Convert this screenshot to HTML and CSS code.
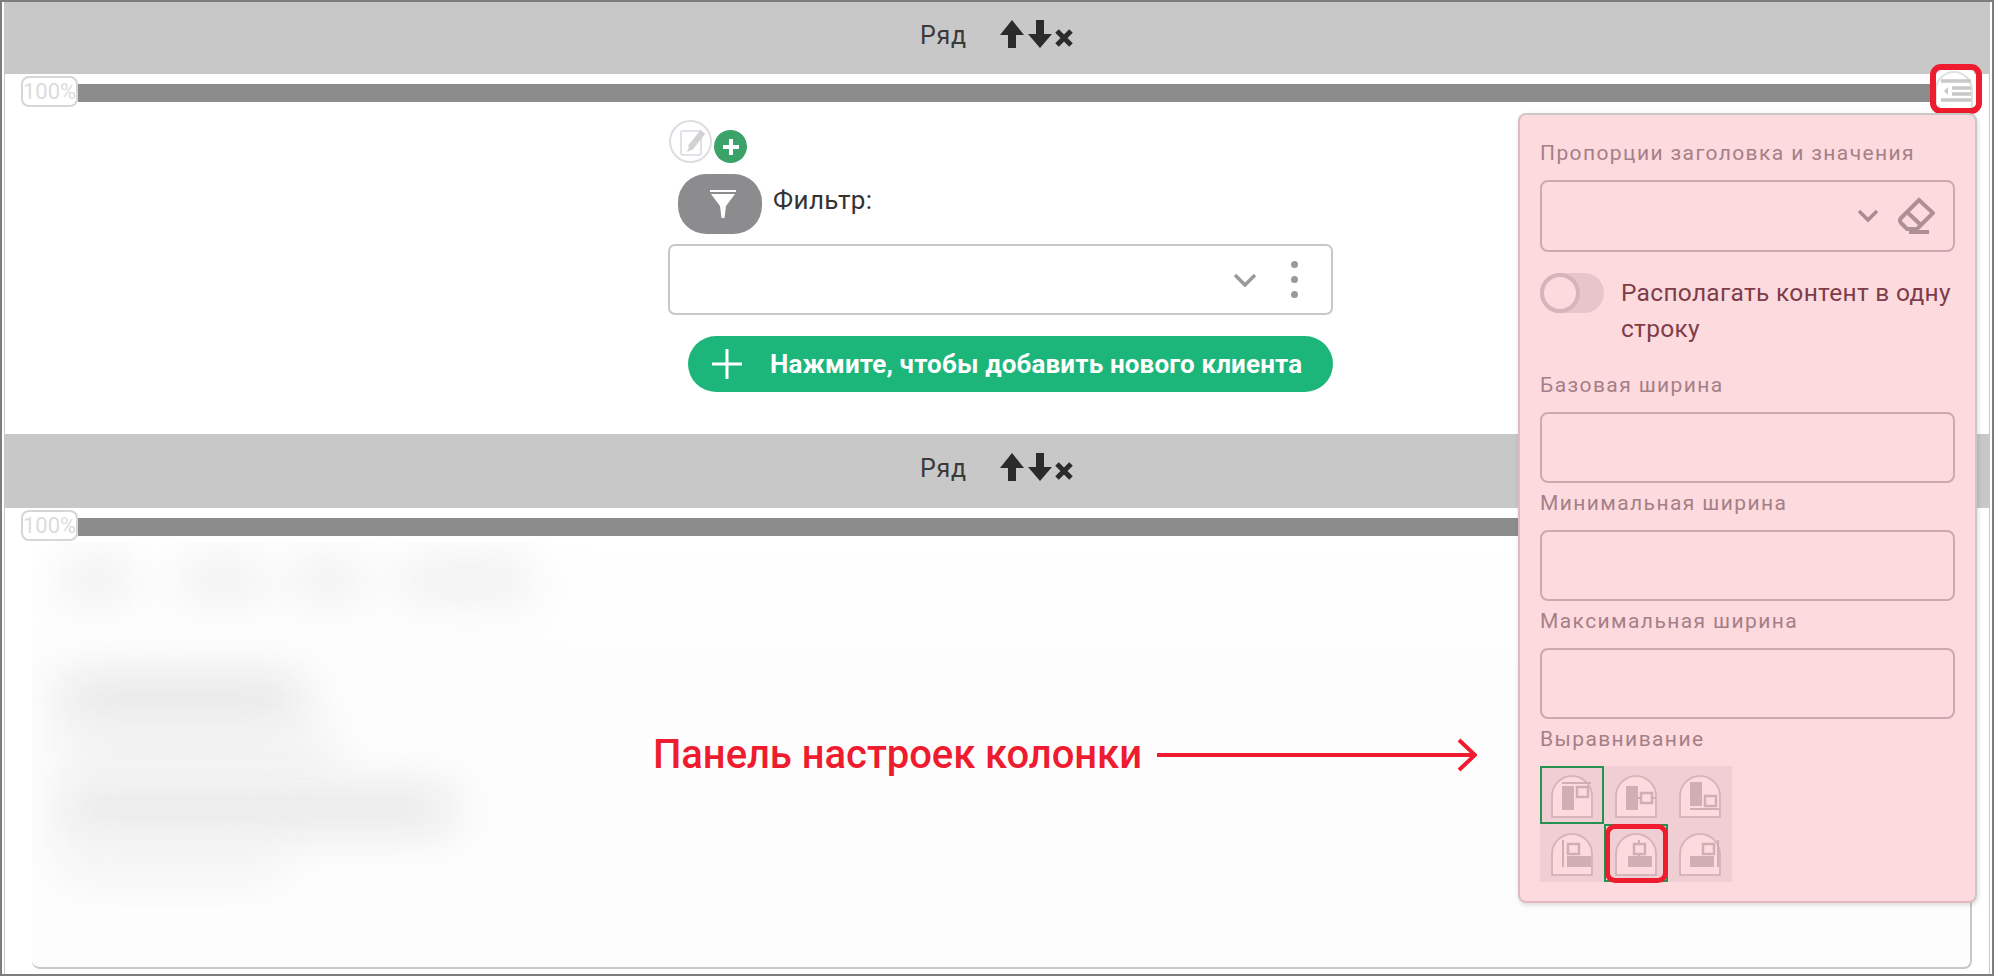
FILE: index.html
```html
<!DOCTYPE html>
<html lang="ru">
<head>
  <meta charset="UTF-8" />
  <title>Панель настроек колонки</title>
  <link rel="stylesheet" href="styles.css">
</head>
<body>
  <div class="page">
    <div class="rows">

      <div class="row-head">
        <span class="row-title">Ряд</span>
        <span class="row-tools">
          <svg width="24" height="28" viewBox="0 0 24 28"><path d="M12 0 24 15H16V28H8V15H0Z"/></svg>
          <svg width="24" height="28" viewBox="0 0 24 28"><path d="M8 0H16V14H24L12 28 0 14H8Z"/></svg>
          <svg width="20" height="18" viewBox="0 0 20 18"><path d="M3 2 17 16M17 2 3 16"/></svg>
        </span>
      </div>
      <div class="row-body row-first">
        <div class="width-line">
          <span class="width-badge">100%</span>
          <span class="width-bar"></span>
        </div>
        <div class="column">
          <div class="edit-line">
            <span class="edit-btn">
              <svg width="28" height="28" viewBox="0 0 28 28">
                <rect x="4" y="3" width="20" height="24" rx="2" class="edit-box"/>
                <path d="M26 4 13 20" class="edit-pen"/>
                <path d="M13 17 10 24 16 21Z" class="edit-tip"/>
              </svg>
            </span>
            <span class="add-btn">
              <svg width="18" height="18" viewBox="0 0 18 18"><path d="M7 1h4v6h6v4h-6v6H7v-6H1V7h6z"/></svg>
            </span>
          </div>
          <div class="filter-line">
            <span class="filter-btn">
              <svg width="28" height="30" viewBox="0 0 28 30">
                <path d="M1 1H27V3H1ZM2 5H26L17 17 15.5 29H12.5L11 17Z"/>
              </svg>
            </span>
            <span class="filter-label">Фильтр:</span>
          </div>
          <div class="select-box">
            <svg class="chevron" width="24" height="14" viewBox="0 0 24 14"><path d="M2 2 12 12 22 2"/></svg>
            <span class="more-dots"><i></i><i></i><i></i></span>
          </div>
          <div class="add-client">
            <svg width="32" height="32" viewBox="0 0 32 32"><path d="M16 1V31M1 16H31"/></svg>
            <span>Нажмите, чтобы добавить нового клиента</span>
          </div>
        </div>
      </div>

      <div class="row-head row-head-tall">
        <span class="row-title">Ряд</span>
        <span class="row-tools">
          <svg width="24" height="28" viewBox="0 0 24 28"><path d="M12 0 24 15H16V28H8V15H0Z"/></svg>
          <svg width="24" height="28" viewBox="0 0 24 28"><path d="M8 0H16V14H24L12 28 0 14H8Z"/></svg>
          <svg width="20" height="18" viewBox="0 0 20 18"><path d="M3 2 17 16M17 2 3 16"/></svg>
        </span>
      </div>
      <div class="row-body row-last">
        <div class="width-line">
          <span class="width-badge">100%</span>
          <span class="width-bar"></span>
        </div>
        <div class="table-box">
          <div class="blur-chips"><i></i><i></i><i></i><i></i></div>
          <div class="blur-line line-a"></div>
          <div class="blur-line line-b"></div>
          <div class="blur-line line-c"></div>
          <div class="blur-line line-d"></div>
        </div>
      </div>
    </div>

    <!-- кнопка настроек колонки -->
    <div class="settings-btn">
      <svg width="40" height="38" viewBox="0 0 40 38">
        <path d="M2 38V20a18 18 0 0 1 36 0V38" class="dome"/>
        <path d="M7 11H37M18 18H37M18 24H37M7 30H37" class="dome-lines"/>
        <path d="M14 17V25L10 21Z" class="dome-arrow"/>
      </svg>
    </div>
    <div class="mark mark-settings"></div>

    <!-- панель настроек -->
    <div class="panel">
      <div class="panel-label">Пропорции заголовка и значения</div>
      <div class="panel-select">
        <svg class="panel-chevron" width="22" height="14" viewBox="0 0 22 14"><path d="M2 2 11 11 20 2"/></svg>
        <svg class="panel-eraser" width="38" height="38" viewBox="0 0 38 38">
          <path d="M22 3 36 16 20 32H10L4 26Q2 23 4 21ZM10 15 25 29M12 35H32"/>
        </svg>
      </div>
      <div class="toggle-line">
        <span class="toggle"><span class="toggle-knob"></span></span>
        <span class="toggle-text">Располагать контент в одну строку</span>
      </div>
      <div class="panel-label label-first">Базовая ширина</div>
      <div class="panel-input"></div>
      <div class="panel-label">Минимальная ширина</div>
      <div class="panel-input"></div>
      <div class="panel-label">Максимальная ширина</div>
      <div class="panel-input"></div>
      <div class="panel-label">Выравнивание</div>
      <div class="align-grid">
        <div class="align-cell active">
          <svg width="64" height="58" viewBox="0 0 64 58">
            <path class="ic-dome" d="M12 51V30a20 20 0 0 1 40 0V51Z"/>
            <path class="ic-line" d="M22 17H51"/>
            <rect class="ic-fill" x="22" y="20" width="12" height="24"/>
            <rect class="ic-box" x="37" y="21" width="11" height="10"/>
          </svg>
        </div>
        <div class="align-cell">
          <svg width="64" height="58" viewBox="0 0 64 58">
            <path class="ic-dome" d="M12 51V30a20 20 0 0 1 40 0V51Z"/>
            <path class="ic-line" d="M34 32H52"/>
            <rect class="ic-fill" x="22" y="20" width="12" height="24"/>
            <rect class="ic-box" x="37" y="27" width="11" height="10"/>
          </svg>
        </div>
        <div class="align-cell">
          <svg width="64" height="58" viewBox="0 0 64 58">
            <path class="ic-dome" d="M12 51V30a20 20 0 0 1 40 0V51Z"/>
            <path class="ic-line" d="M22 43H51"/>
            <rect class="ic-fill" x="22" y="16" width="12" height="24"/>
            <rect class="ic-box" x="37" y="30" width="11" height="10"/>
          </svg>
        </div>
        <div class="align-cell">
          <svg width="64" height="58" viewBox="0 0 64 58">
            <path class="ic-dome" d="M12 51V30a20 20 0 0 1 40 0V51Z"/>
            <path class="ic-line" d="M23 16V43"/>
            <rect class="ic-box" x="28" y="20" width="11" height="10"/>
            <rect class="ic-fill" x="27" y="32" width="24" height="11"/>
          </svg>
        </div>
        <div class="align-cell active">
          <svg width="64" height="58" viewBox="0 0 64 58">
            <path class="ic-dome" d="M12 51V30a20 20 0 0 1 40 0V51Z"/>
            <path class="ic-line" d="M35 16V32"/>
            <rect class="ic-box" x="30" y="20" width="11" height="10"/>
            <rect class="ic-fill" x="24" y="32" width="24" height="11"/>
          </svg>
        </div>
        <div class="align-cell">
          <svg width="64" height="58" viewBox="0 0 64 58">
            <path class="ic-dome" d="M12 51V30a20 20 0 0 1 40 0V51Z"/>
            <path class="ic-line" d="M50 16V43"/>
            <rect class="ic-box" x="35" y="20" width="11" height="10"/>
            <rect class="ic-fill" x="22" y="32" width="24" height="11"/>
          </svg>
        </div>
      </div>
    </div>
    <div class="mark mark-align"></div>

    <!-- подпись со стрелкой -->
    <div class="callout">
      <span class="callout-text">Панель настроек колонки</span>
      <svg width="320" height="34" viewBox="0 0 320 34">
        <path d="M0 17H317M302 2 318 17 302 32"/>
      </svg>
    </div>
  </div>
</body>
</html>
```

FILE: styles.css
```css
body {
  margin: 0;
  background: #fff;
  font-family: Roboto, 'Liberation Sans', sans-serif;
  color: #333;
}

.page {
  position: relative;
  box-sizing: border-box;
  width: 1994px;
  height: 976px;
  padding: 0 2px;
  border: 2px solid #7d7d7d;
  overflow: hidden;
}

.rows {
  display: flex;
  flex-direction: column;
  height: 100%;
  border-left: 1px solid #c8c8c8;
  border-right: 1px solid #c8c8c8;
}

/* шапка ряда */
.row-head {
  display: flex;
  align-items: center;
  justify-content: center;
  box-sizing: border-box;
  height: 72px;
  padding-bottom: 6px;
  flex-shrink: 0;
  background: #c8c8c8;
}

.row-head-tall { height: 74px; }

.row-first .width-line,
.row-last .width-line {
  margin-top: 2px;
}

.row-title {
  font-size: 25px;
  letter-spacing: 0.8px;
  color: #3a3a3a;
  margin-right: 33px;
}

.row-tools {
  display: flex;
  align-items: center;
  gap: 4px;
  height: 28px;
  margin-top: -2px;
}

.row-tools svg { fill: #2b2b2b; }
.row-tools svg:last-child {
  fill: none;
  stroke: #2b2b2b;
  stroke-width: 5;
  margin-left: -2px;
  margin-top: 7px;
}

.row-body { background: #fff; }
.row-first { height: 360px; flex-shrink: 0; }
.row-last {
  flex: 1;
  display: flex;
  flex-direction: column;
  min-height: 0;
}

/* полоса ширины */
.width-line {
  display: flex;
  align-items: center;
  height: 31px;
  padding-left: 16px;
  padding-right: 50px;
}

.width-badge {
  box-sizing: border-box;
  width: 57px;
  height: 31px;
  line-height: 28px;
  border: 2px solid #d6d6d6;
  border-radius: 8px;
  background: #fff;
  color: #dcdcdc;
  font-size: 22px;
  white-space: nowrap;
  flex-shrink: 0;
  z-index: 1;
}

.width-bar {
  flex: 1;
  height: 18px;
  margin-top: 3px;
  background: #8c8c8c;
}

/* колонка с фильтром */
.column {
  width: 665px;
  margin: 13px 0 0 663px;
}

.edit-line {
  display: flex;
  align-items: flex-end;
  height: 43px;
  gap: 2px;
  padding-left: 1px;
}

.edit-btn {
  display: flex;
  align-items: center;
  justify-content: center;
  box-sizing: border-box;
  width: 43px;
  height: 43px;
  border: 2px solid #dedede;
  border-radius: 50%;
}

.edit-box { fill: #fff; stroke: #dfe2ea; stroke-width: 2; }
.edit-pen { fill: none; stroke: #d2d2d2; stroke-width: 6; }
.edit-tip { fill: #d2d2d2; }

.add-btn {
  display: flex;
  align-items: center;
  justify-content: center;
  width: 33px;
  height: 33px;
  border-radius: 50%;
  background: #3ba269;
}

.add-btn svg { fill: #fff; }

.filter-line {
  display: flex;
  align-items: flex-start;
  margin-top: 11px;
  padding-left: 10px;
}

.filter-btn {
  display: flex;
  align-items: center;
  justify-content: center;
  width: 84px;
  height: 60px;
  border-radius: 28px;
  background: #8c8b8d;
}

.filter-btn svg {
  fill: #fff;
  margin-left: 6px;
}

.filter-label {
  margin: 11px 0 0 11px;
  font-size: 26px;
  line-height: 30px;
  letter-spacing: 0.4px;
  color: #333;
}

.select-box {
  display: flex;
  align-items: center;
  justify-content: flex-end;
  box-sizing: border-box;
  height: 71px;
  margin-top: 10px;
  padding-right: 33px;
  border: 2px solid #c8c8c8;
  border-radius: 7px;
}

.chevron {
  fill: none;
  stroke: #9a9a9a;
  stroke-width: 3.5;
  margin-right: 34px;
}

.more-dots {
  display: flex;
  flex-direction: column;
  gap: 8px;
}

.more-dots i {
  display: block;
  width: 7px;
  height: 7px;
  border-radius: 50%;
  background: #9a9a9a;
}

.add-client {
  display: flex;
  align-items: center;
  height: 56px;
  margin: 21px 0 0 20px;
  padding-left: 23px;
  border-radius: 28px;
  background: #1db67a;
  color: #fff;
  font-size: 26px;
  font-weight: 700;
  letter-spacing: 0.14px;
  white-space: nowrap;
}

.add-client svg {
  fill: none;
  stroke: #fff;
  stroke-width: 3;
  margin-right: 27px;
}

/* размытая таблица */
.table-box {
  flex: 1;
  box-sizing: border-box;
  margin: 1px 17px 5px 27px;
  padding: 20px 0 0 30px;
  border-right: 2px solid #c8c8c8;
  border-bottom: 2px solid #c8c8c8;
  border-radius: 0 0 8px 8px;
  overflow: hidden;
  background: linear-gradient(#fff, #fdfdfd 30%);
}

.blur-chips {
  display: flex;
  height: 34px;
}

.blur-chips i {
  display: block;
  height: 34px;
  background: #ebebeb;
  filter: blur(24px);
}

.blur-chips i:nth-child(1) { width: 70px; margin-right: 50px; }
.blur-chips i:nth-child(2) { width: 80px; margin-right: 30px; }
.blur-chips i:nth-child(3) { width: 70px; margin-right: 40px; }
.blur-chips i:nth-child(4) { width: 130px; }

.blur-line {
  filter: blur(24px);
}

.line-a { width: 240px; height: 36px; margin-top: 84px; background: #e0e0e0; }
.line-b { width: 270px; height: 30px; margin-top: 18px; background: #ececec; }
.line-c { width: 390px; height: 34px; margin-top: 28px; background: #e0e0e0; }
.line-d { width: 220px; height: 26px; margin-top: 20px; background: #eeeeee; }

/* кнопка настроек */
.settings-btn {
  position: absolute;
  left: 1932px;
  top: 68px;
  width: 40px;
  height: 38px;
  background: #fff;
}

.dome { fill: #fff; stroke: #e0e0e0; stroke-width: 2; }
.dome-lines { fill: none; stroke: #c8c8c8; stroke-width: 3.5; }
.dome-arrow { fill: #c8c8c8; }

/* красные рамки разметки */
.mark {
  position: absolute;
  box-sizing: border-box;
  border: 5px solid #ee1c2e;
  pointer-events: none;
}

.mark-settings {
  left: 1928px;
  top: 62px;
  width: 52px;
  height: 50px;
  border-width: 6px;
  border-radius: 11px;
}

.mark-align {
  left: 1603px;
  top: 822px;
  width: 63px;
  height: 59px;
  border-radius: 10px;
}

/* панель настроек */
.panel {
  position: absolute;
  left: 1516px;
  top: 111px;
  box-sizing: border-box;
  width: 459px;
  height: 790px;
  padding: 26px 20px 0 20px;
  border: 2px solid #c8c8c8;
  border-left-color: #dcbcc1;
  border-bottom-color: #e3b9bf;
  border-radius: 8px;
  background: #fddade;
  box-shadow: 1px 2px 5px rgba(0, 0, 0, 0.15);
}

.panel-label {
  height: 24px;
  line-height: 24px;
  margin-bottom: 15px;
  font-size: 21px;
  letter-spacing: 1.4px;
  color: #a57f87;
  white-space: nowrap;
}

.panel-select,
.panel-input {
  box-sizing: border-box;
  height: 71px;
  margin-bottom: 8px;
  border: 2px solid #cda8ae;
  border-radius: 8px;
}

.panel-select {
  display: flex;
  align-items: center;
  justify-content: flex-end;
  height: 72px;
  margin-bottom: 0;
  padding-right: 18px;
}

.panel-chevron {
  fill: none;
  stroke: #a98c91;
  stroke-width: 3.5;
  margin-right: 18px;
}

.panel-eraser {
  fill: none;
  stroke: #ad8f95;
  stroke-width: 4;
}

.toggle-line {
  display: flex;
  gap: 17px;
  margin-top: 21px;
}

.toggle {
  display: block;
  width: 64px;
  height: 40px;
  border-radius: 20px;
  background: #e8c5ca;
  flex-shrink: 0;
}

.toggle-knob {
  display: block;
  box-sizing: border-box;
  width: 40px;
  height: 40px;
  border: 4px solid #d6b4ba;
  border-radius: 50%;
  background: #fddade;
}

.toggle-text {
  margin-top: 2px;
  font-size: 24.5px;
  line-height: 36px;
  color: #7d3d49;
  letter-spacing: 0.3px;
}

.label-first { margin-top: 26px; }

.align-grid {
  display: grid;
  grid-template-columns: repeat(3, 64px);
  grid-template-rows: repeat(2, 58px);
  width: 192px;
  margin-top: 1px;
  background: #efcfd3;
}

.align-cell {
  box-sizing: border-box;
  height: 58px;
}

.align-cell svg { display: block; }
.align-cell.active { outline: 2px solid #27924f; outline-offset: -2px; }

.ic-dome { fill: #fddade; stroke: #d6b6bb; stroke-width: 2; }
.ic-line { fill: none; stroke: #cfafb4; stroke-width: 2; }
.ic-fill { fill: #d0afb4; }
.ic-box { fill: #fddade; stroke: #cfafb4; stroke-width: 2.5; }

/* подпись */
.callout {
  position: absolute;
  left: 651px;
  top: 729px;
  display: flex;
  align-items: center;
  gap: 15px;
  color: #ee1c2e;
}

.callout-text {
  font-size: 40px;
  font-weight: 500;
  letter-spacing: -0.05px;
  line-height: 48px;
  white-space: nowrap;
}

.callout svg {
  fill: none;
  stroke: #ee1c2e;
  stroke-width: 4;
}
```
